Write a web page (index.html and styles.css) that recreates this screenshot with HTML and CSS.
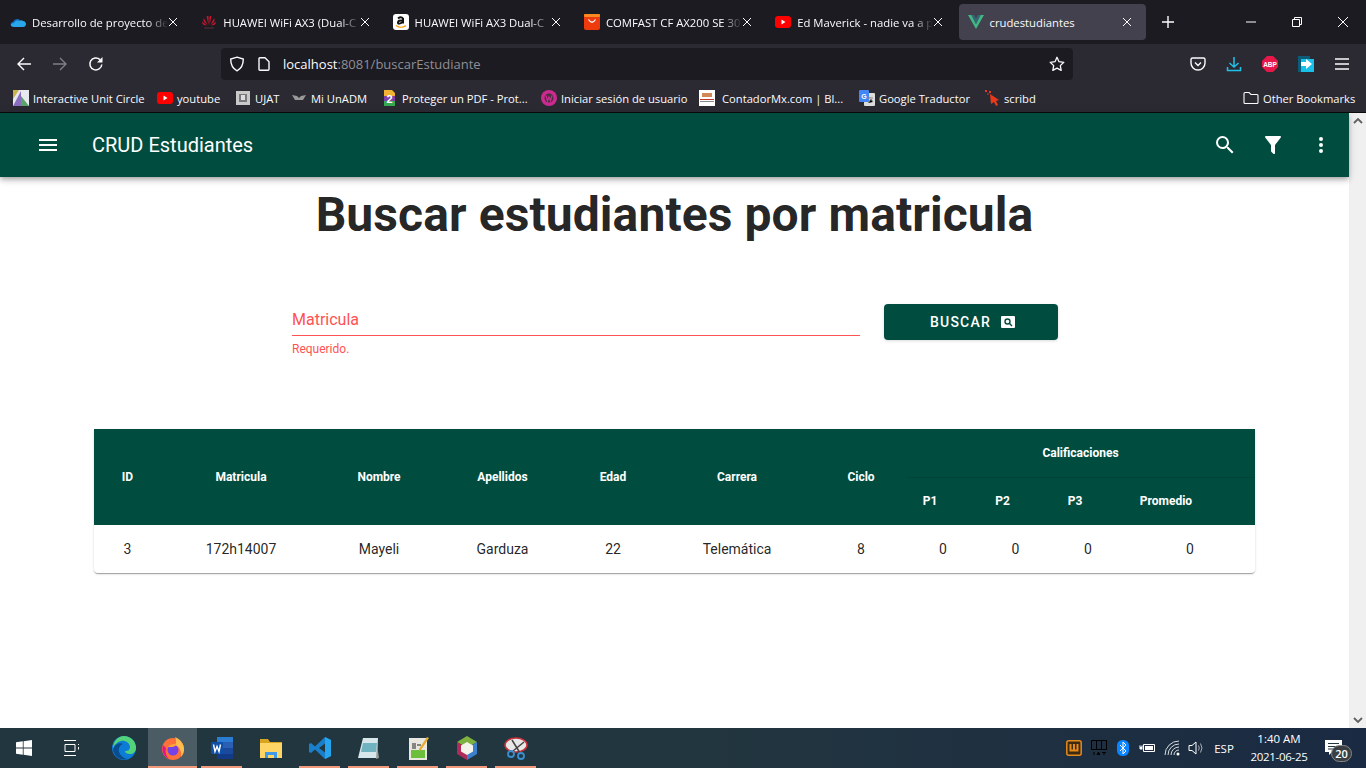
FILE: index.html
```html
<!DOCTYPE html>
<html>

<head>
    <title>crudestudiantes</title>
    <link rel="stylesheet" href="styles.css">
</head>

<body>
    <div class="tabs-bar">
        <div class="tab">
            <svg class="fav" viewBox="0 0 16 16"><path fill="#0f6cc4" d="M1 12c-1-2 0-4 2-4 1-3 5-4 7-2l-3 6z"/><path fill="#28a8ea" d="M4 13c-2 0-3-1-3-2s1-2 3-2c1-2 3-3 5-2 1-1 3-1 4 0 2 0 3 2 3 3s-1 3-3 3z"/></svg>
            <span class="tab-title">Desarrollo de proyecto de</span>
            <svg class="tab-close" viewBox="0 0 10 10"><path stroke="#fbfbfe" d="M1 1l8 8M9 1 1 9"/></svg>
        </div>
        <div class="tab">
            <svg class="fav" viewBox="0 0 16 16"><g fill="#c7162b"><path d="M7.400 11 5.600 2.500Q7 1 7.600 3z"/><path d="M8.600 11l1.800-8.500Q9 1 8.400 3z"/><path d="M6.600 11 2.800 4Q2 6 3 8z"/><path d="M9.400 11l3.800-7Q14 6 13 8z"/><path d="M6 11.500 1 7.500Q1 10 3 11z"/><path d="M10 11.500l5-4Q15 10 13 11z"/></g><rect x="3" y="13.500" width="10" height="1" fill="#5a3038"/></svg>
            <span class="tab-title">HUAWEI WiFi AX3 (Dual-C</span>
            <svg class="tab-close" viewBox="0 0 10 10"><path stroke="#fbfbfe" d="M1 1l8 8M9 1 1 9"/></svg>
        </div>
        <div class="tab">
            <svg class="fav" viewBox="0 0 16 16"><rect width="16" height="16" rx="3" fill="#fff"/><path fill="none" stroke="#111" stroke-width="2" d="M5 4.500Q8 2 10 4.500V9.500M10 6.500Q5 6 5 8.500T10 8"/><path fill="none" stroke="#f90" stroke-width="1.200" d="M3 11.500Q8 15 13 11.500"/></svg>
            <span class="tab-title">HUAWEI WiFi AX3 Dual-C</span>
            <svg class="tab-close" viewBox="0 0 10 10"><path stroke="#fbfbfe" d="M1 1l8 8M9 1 1 9"/></svg>
        </div>
        <div class="tab">
            <svg class="fav" viewBox="0 0 16 16"><rect width="16" height="16" rx="2" fill="#ee3a0c"/><rect width="16" height="3" rx="1" fill="#f98a1f"/><path fill="none" stroke="#fff" stroke-width="1.300" d="M4.500 5.500Q8 11 11.500 5.500"/></svg>
            <span class="tab-title">COMFAST CF AX200 SE 30</span>
            <svg class="tab-close" viewBox="0 0 10 10"><path stroke="#fbfbfe" d="M1 1l8 8M9 1 1 9"/></svg>
        </div>
        <div class="tab">
            <svg class="fav" viewBox="0 0 16 16"><rect y="2" width="16" height="12" rx="3" fill="#f00"/><path fill="#fff" d="M6.500 5.500v5l4-2.500z"/></svg>
            <span class="tab-title">Ed Maverick - nadie va a p</span>
            <svg class="tab-close" viewBox="0 0 10 10"><path stroke="#fbfbfe" d="M1 1l8 8M9 1 1 9"/></svg>
        </div>
        <div class="tab tab-active">
            <svg class="fav" viewBox="0 0 16 16"><path fill="#41b883" d="M0 1h3.500L8 10l4.500-9H16L8 15z"/><path fill="#35697a" d="M3.500 1H6l2 4 2-4h2.500L8 10z"/></svg>
            <span class="tab-title">crudestudiantes</span>
            <svg class="tab-close" viewBox="0 0 10 10"><path stroke="#fbfbfe" d="M1 1l8 8M9 1 1 9"/></svg>
        </div>
        <svg class="new-tab" viewBox="0 0 14 14"><path stroke="#fbfbfe" stroke-width="1.400" d="M7 1v12M1 7h12"/></svg>
        <div class="win-buttons">
            <svg viewBox="0 0 12 12"><path stroke="#fff" d="M1 6h10"/></svg>
            <svg viewBox="0 0 12 12"><path fill="none" stroke="#fff" d="M1.500 3.500h7v7h-7zM3.500 3.500v-2h7v7h-2"/></svg>
            <svg viewBox="0 0 12 12"><path stroke="#fff" d="M1 1l10 10M11 1 1 11"/></svg>
        </div>
    </div>

    <div class="nav-bar">
        <svg class="nav-icon" viewBox="0 0 16 16"><path fill="none" stroke="#fbfbfe" stroke-width="1.400" d="M15 8H2M8 2 2 8l6 6"/></svg>
        <svg class="nav-icon nav-off" viewBox="0 0 16 16"><path fill="none" stroke="#fbfbfe" stroke-width="1.400" d="M1 8h13M8 2l6 6-6 6"/></svg>
        <svg class="nav-icon" viewBox="0 0 16 16"><path fill="none" stroke="#fbfbfe" stroke-width="1.500" d="M13.800 8.500A6 6 0 1 1 12 3.600"/><path fill="#fbfbfe" d="M14.500 1v5.500H9z"/></svg>
        <div class="url-bar">
            <svg class="url-icon" viewBox="0 0 16 16"><path fill="none" stroke="#fbfbfe" stroke-width="1.400" d="M8 1.200 14.300 3c0 6-1.800 9.500-6.300 11.800C3.500 12.500 1.700 9 1.700 3z"/></svg>
            <svg class="url-icon url-doc" viewBox="0 0 16 16"><path fill="none" stroke="#fbfbfe" stroke-width="1.400" stroke-linejoin="round" d="M3 2.800q0-1 1-1h5l4 4v7.400q0 1-1 1H4q-1 0-1-1z"/></svg>
            <span class="url-text">localhost<span class="url-dim">:8081/buscarEstudiante</span></span>
            <svg class="url-star" viewBox="0 0 16 16"><path fill="none" stroke="#fbfbfe" stroke-width="1.300" stroke-linejoin="round" d="m8 1.300 2 4.400 4.800.6-3.500 3.300.9 4.800L8 12.100l-4.200 2.300.9-4.800L1.200 6.300 6 5.700z"/></svg>
        </div>
        <div class="nav-right">
            <svg viewBox="0 0 16 16"><path fill="none" stroke="#fbfbfe" stroke-width="1.400" d="M2.500 2h11q1.500 0 1.500 1.500V7A7 7 0 0 1 1 7V3.500Q1 2 2.500 2z"/><path fill="none" stroke="#fbfbfe" stroke-width="1.400" d="m5 6.500 3 3 3-3"/></svg>
            <svg viewBox="0 0 16 16"><path fill="none" stroke="#1fc2ea" stroke-width="1.500" d="M8 1v10M3.500 7 8 11l4.500-4M1.500 11v3.500h13V11"/></svg>
            <svg viewBox="0 0 16 16"><path fill="#e8174a" d="M5 0h6l5 5v6l-5 5H5l-5-5V5z"/><text class="abp-text" x="8" y="10.500">ABP</text></svg>
            <svg viewBox="0 0 16 16"><path fill="#0b5c78" d="M0 0h12v3H3v13H0z"/><path fill="#18c1e8" d="M3 3h13v13H3z"/><path fill="#fff" d="M3 6h5V3l6 5-6 5v-3H3z"/></svg>
            <svg viewBox="0 0 16 16"><path stroke="#fbfbfe" stroke-width="1.400" d="M1 3h14M1 8h14M1 13h14"/></svg>
        </div>
    </div>

    <div class="bookmarks">
        <div class="bm">
            <svg class="bm-icon" viewBox="0 0 16 16"><rect width="16" height="16" fill="#e8e8ef"/><path fill="#8a6fc0" d="M0 16 8 1v15z"/><path fill="#5aa36a" d="M8 6l8 10H8z"/><path fill="#c9b34d" d="M0 0h6L0 9z"/></svg>
            <span>Interactive Unit Circle</span>
        </div>
        <div class="bm">
            <svg class="bm-icon" viewBox="0 0 16 16"><rect y="2" width="16" height="12" rx="3" fill="#f00"/><path fill="#fff" d="M6.500 5.500v5l4-2.500z"/></svg>
            <span>youtube</span>
        </div>
        <div class="bm">
            <svg class="bm-icon" viewBox="0 0 16 16"><rect x="1" y="1" width="14" height="14" fill="#c9c9c9"/><rect x="4" y="4" width="8" height="8" fill="#77787c"/><path fill="#ddd" d="M6 5h4v5H6z"/></svg>
            <span>UJAT</span>
        </div>
        <div class="bm">
            <svg class="bm-icon" viewBox="0 0 16 16"><path fill="#999" d="M1 5l5 1 2 2 2-2 5-1-3 5H8L4 10z"/></svg>
            <span>Mi UnADM</span>
        </div>
        <div class="bm">
            <svg class="bm-icon" viewBox="0 0 16 16"><path fill="#f2b233" d="M2 0h8l3 3v3H2z"/><path fill="#7d3fa8" d="M2 6h11v5H2z"/><path fill="#35a852" d="M2 11h11v5H2z"/><text class="bm-two" x="7.500" y="13">2</text></svg>
            <span>Proteger un PDF - Prot...</span>
        </div>
        <div class="bm">
            <svg class="bm-icon" viewBox="0 0 16 16"><circle cx="8" cy="8" r="8" fill="#cc2a8f"/><circle cx="8" cy="8" r="4.500" fill="#43313f"/><path fill="none" stroke="#cc2a8f" stroke-width="1.300" d="M5 5.500 6.500 11 8 7l1.500 4L11 5.500"/></svg>
            <span>Iniciar sesión de usuario</span>
        </div>
        <div class="bm">
            <svg class="bm-icon" viewBox="0 0 16 16"><rect width="16" height="16" fill="#fff"/><rect x="3" y="3" width="10" height="4" fill="#d18a56"/><rect x="1" y="9" width="14" height="1" fill="#c0392b"/><rect x="1" y="11" width="14" height="1" fill="#888"/></svg>
            <span class="bm-wide">ContadorMx.com | Bl...</span>
        </div>
        <div class="bm">
            <svg class="bm-icon" viewBox="0 0 16 16"><rect x="5" y="3" width="11" height="13" rx="1" fill="#dcdcdc"/><rect width="10" height="12" rx="1" fill="#4285f4"/><text class="bm-g" x="5" y="9">G</text><path stroke="#888" d="M8 8h6M11 7v1M9 13l3-4 2 3"/></svg>
            <span>Google Traductor</span>
        </div>
        <div class="bm">
            <svg class="bm-icon" viewBox="0 0 16 16"><path fill="#e8391a" d="m6 4 9 6-3 1 2 4-2 1-2-4-3 2z"/><path fill="#e8391a" d="M1 0h2v2H1zM5 1h2v2H5z"/><path fill="#6b3a30" d="M3 3h2v2H3z"/></svg>
            <span>scribd</span>
        </div>
        <div class="bm bm-other">
            <svg class="bm-icon" viewBox="0 0 16 16"><path fill="none" stroke="#fbfbfe" stroke-width="1.100" d="M1 3.500q0-1 1-1h4l2 2h6q1 0 1 1v7q0 1-1 1H2q-1 0-1-1z"/></svg>
            <span>Other Bookmarks</span>
        </div>
    </div>

    <div class="viewport">
        <div class="page">
            <header class="app-bar">
                <svg class="app-icon menu-icon" viewBox="0 0 24 24"><path d="M3,6H21V8H3V6M3,11H21V13H3V11M3,16H21V18H3V16Z"/></svg>
                <div class="app-title">CRUD Estudiantes</div>
                <svg class="app-icon" viewBox="0 0 24 24"><path d="M9.5,3A6.5,6.5 0 0,1 16,9.5C16,11.11 15.41,12.59 14.44,13.73L14.71,14H15.5L20.5,19L19,20.5L14,15.5V14.71L13.73,14.44C12.59,15.41 11.11,16 9.5,16A6.5,6.5 0 0,1 3,9.5A6.5,6.5 0 0,1 9.5,3M9.5,5C7,5 5,7 5,9.5C5,12 7,14 9.5,14C12,14 14,12 14,9.5C14,7 12,5 9.500,5Z"/></svg>
                <svg class="app-icon" viewBox="0 0 24 24"><path d="M14,12V19.88C14.04,20.18 13.94,20.5 13.71,20.71C13.32,21.1 12.69,21.1 12.3,20.71L10.29,18.7C10.06,18.47 9.96,18.16 10,17.87V12H9.97L4.21,4.62C3.87,4.19 3.95,3.56 4.38,3.22C4.57,3.08 4.78,3 5,3V3H19V3C19.22,3 19.43,3.08 19.62,3.22C20.05,3.56 20.13,4.19 19.79,4.62L14.03,12H14Z"/></svg>
                <svg class="app-icon" viewBox="0 0 24 24"><path d="M12,16A2,2 0 0,1 14,18A2,2 0 0,1 12,20A2,2 0 0,1 10,18A2,2 0 0,1 12,16M12,10A2,2 0 0,1 14,12A2,2 0 0,1 12,14A2,2 0 0,1 10,12A2,2 0 0,1 12,10M12,4A2,2 0 0,1 14,6A2,2 0 0,1 12,8A2,2 0 0,1 10,6A2,2 0 0,1 12,4Z"/></svg>
            </header>

            <h1>Buscar estudiantes por matricula</h1>

            <form class="search-form">
                <div class="field">
                    <label class="field-label">Matricula</label>
                    <div class="field-hint">Requerido.</div>
                </div>
                <button class="search-button" type="button">
                    BUSCAR
                    <svg viewBox="0 0 16 16"><rect x="1" y="2" width="14" height="12" rx="1" fill="#fff"/><circle cx="7.500" cy="7.500" r="2.500" fill="none" stroke="#004d40" stroke-width="1.400"/><path stroke="#004d40" stroke-width="1.400" d="m9.500 9.500 2.500 2.500"/></svg>
                </button>
            </form>

            <div class="table-card">
                <table>
                    <colgroup>
                        <col class="col-id">
                        <col class="col-matricula">
                        <col class="col-nombre">
                        <col class="col-apellidos">
                        <col class="col-edad">
                        <col class="col-carrera">
                        <col class="col-ciclo">
                        <col class="col-p1">
                        <col class="col-p2">
                        <col class="col-p3">
                        <col class="col-promedio">
                    </colgroup>
                    <thead>
                        <tr>
                            <th rowspan="2">ID</th>
                            <th rowspan="2">Matricula</th>
                            <th rowspan="2">Nombre</th>
                            <th rowspan="2">Apellidos</th>
                            <th rowspan="2">Edad</th>
                            <th rowspan="2">Carrera</th>
                            <th rowspan="2">Ciclo</th>
                            <th colspan="4" class="group-head">Calificaciones</th>
                        </tr>
                        <tr>
                            <th class="sub-head">P1</th>
                            <th class="sub-head">P2</th>
                            <th class="sub-head">P3</th>
                            <th class="sub-head-wide">Promedio</th>
                        </tr>
                    </thead>
                    <tbody>
                        <tr>
                            <td>3</td>
                            <td>172h14007</td>
                            <td>Mayeli</td>
                            <td>Garduza</td>
                            <td>22</td>
                            <td>Telemática</td>
                            <td>8</td>
                            <td>0</td>
                            <td>0</td>
                            <td>0</td>
                            <td>0</td>
                        </tr>
                    </tbody>
                </table>
            </div>
        </div>
        <div class="scrollbar">
            <svg viewBox="0 0 10 6"><path fill="none" stroke="#606060" stroke-width="1.800" d="M1 5l4-4 4 4"/></svg>
            <svg viewBox="0 0 10 6"><path fill="none" stroke="#606060" stroke-width="1.800" d="M1 1l4 4 4-4"/></svg>
        </div>
    </div>

    <div class="taskbar">
        <div class="task-fixed">
            <svg class="task-icon-sm" viewBox="0 0 16 16"><path fill="#fff" d="M0 2.300 6.800 1.300v6.300H0zM7.600 1.200 16 0v7.600H7.600zM0 8.400h6.800v6.300L0 13.700zM7.600 8.400H16V16l-8.400-1.200z"/></svg>
        </div>
        <div class="task-fixed task-view">
            <svg class="task-icon-sm" viewBox="0 0 16 16"><path fill="none" stroke="#fff" d="M0 .5h12M0 15.500h12M1 4.500h10v7H1zM14.500 4v1M14.500 7v2.500"/></svg>
        </div>
        <div class="task-slot">
            <svg viewBox="0 0 24 24"><circle cx="12" cy="12" r="12" fill="#0c7cd5"/><path fill="#52d27a" d="M12 0a12 12 0 0 1 12 12c0 4-3 6-6 6s-5-1-5-3c3 0 5-1 5-4 0-4-5-7-9-6-4 1-7 4-8 8C1 5 6 0 12 0z"/><path fill="#0a4d8f" d="M1 14c1-5 6-8 10-6-3 1-5 4-4 8 1 3 4 6 8 7-7 2-13-3-14-9z"/></svg>
        </div>
        <div class="task-slot task-active task-open">
            <svg viewBox="0 0 24 24"><circle cx="12" cy="13" r="11" fill="#ff7139"/><path fill="#ffbd4f" d="M14 1c5 2 9 7 9 12 0 3-1 6-3 8 1-5-1-10-6-12 2-3 1-6 0-8z"/><circle cx="12" cy="14" r="5.500" fill="#7542e5"/><path fill="#e31587" d="M2 9c-2 6 1 12 6 14-3-3-4-7-3-11z"/><path fill="#ffa436" d="M7 11c2-3 6-4 9-2l-4 2z"/></svg>
        </div>
        <div class="task-slot task-open">
            <svg viewBox="0 0 24 24"><rect x="7" y="1" width="16" height="22" fill="#2b7cd3"/><rect x="7" y="6" width="16" height="6" fill="#2b5fb4"/><rect x="7" y="12" width="16" height="6" fill="#1b4a9c"/><rect x="7" y="18" width="16" height="5" fill="#123a86"/><rect x="1" y="6" width="12" height="12" rx="1" fill="#0f4fa8"/><path fill="none" stroke="#fff" stroke-width="1.400" d="m3.500 8.500 1.500 7 2-5 2 5 1.500-7"/></svg>
        </div>
        <div class="task-slot">
            <svg viewBox="0 0 24 24"><path fill="#d9a520" d="M1 3h8l2 3h12v5H1z"/><path fill="#ffd665" d="M1 7h22v15H1z"/><path fill="#3f9be8" d="M6 16h12v6h-3v-3H9v3H6z"/></svg>
        </div>
        <div class="task-slot task-open">
            <svg viewBox="0 0 24 24"><path fill="#1a7fcb" d="M17 1l6 3v16l-6 3L7 13.500 3 17l-2-1V8l2-1 4 3.500z"/><path fill="#26a5ee" d="M17 1l6 3v16l-6 3z"/><path fill="#22363f" d="M17 7.500v9L11 12z"/></svg>
        </div>
        <div class="task-slot task-open">
            <svg viewBox="0 0 24 24"><path fill="#d7e6ea" d="M6 2h15l-1 20H1z"/><path fill="#6fb2c0" d="M6 7h14l-1 9H4z"/><path fill="#9a9a9a" d="M20 9l2 13-3 1z"/></svg>
        </div>
        <div class="task-slot task-open">
            <svg viewBox="0 0 24 24"><rect x="3" y="2" width="18" height="22" fill="#e8e8e0"/><rect x="5" y="14" width="14" height="8" fill="#6bbf3a"/><path stroke="#222" d="M7 7v6M9 7v6M11 9h4"/><path fill="#e9a92b" d="M21 1l2 1-8 12-2 1 0-2z"/></svg>
        </div>
        <div class="task-slot task-open">
            <svg viewBox="0 0 24 24"><path fill="#7fb13f" d="M12 0l10 6-10 6L2 6z"/><path fill="#b02a5a" d="M2 6l10 6v12L2 18z"/><path fill="#3b7fcf" d="M22 6 12 12v12l10-6z"/><path fill="#f4f4ea" d="M12 6l6 3.500v6L12 19l-6-3.500v-6z"/></svg>
        </div>
        <div class="task-slot task-open">
            <svg viewBox="0 0 24 24"><ellipse cx="12" cy="9" rx="11" ry="7" fill="#e8e8e8" stroke="#c8323a" stroke-width="1.500"/><path stroke="#444" stroke-width="1.500" d="m8 4 8 13M20 6 9 15"/><circle cx="7" cy="18" r="3" fill="none" stroke="#3a8fd0" stroke-width="1.800"/><circle cx="17" cy="20" r="3" fill="none" stroke="#3a8fd0" stroke-width="1.800"/></svg>
        </div>

        <div class="tray">
            <svg class="tray-icon" viewBox="0 0 16 16"><rect x=".8" y=".8" width="14.400" height="14.400" rx="2" fill="#3d2a12" stroke="#e68a1c" stroke-width="1.500"/><path fill="none" stroke="#e68a1c" stroke-width="2" d="M4.500 4v6.500h7V4M8 4v6"/></svg>
            <svg class="tray-icon" viewBox="0 0 16 16"><path fill="none" stroke="#000" d="M.5.500h15v9H.5zM5.500.500v9M10.500.500v9"/><path stroke="#000" d="M3 12v3M6 15l1.500-3L9 15M11 12.500h4M13 12.500V15"/></svg>
            <svg class="tray-icon" viewBox="0 0 16 16"><rect x="2" width="12" height="16" rx="5.500" fill="#0a84ff"/><path fill="none" stroke="#fff" d="m5 5 6 6-3 3V2l3 3-6 6"/></svg>
            <svg class="tray-icon" viewBox="0 0 16 16"><path fill="none" stroke="#fff" d="M4.500 4.500h11v7h-11z"/><rect x="6" y="6" width="8" height="4" fill="#fff"/><path stroke="#fff" stroke-width="1.200" d="M0 8h3M1 5.500V7M3 5.500V7"/><rect x="1" y="7" width="2.500" height="2.500" fill="#fff"/></svg>
            <svg class="tray-icon" viewBox="0 0 16 16"><g fill="none" stroke="#d8dde0"><path d="M1 15A14 14 0 0 1 15 1"/><path d="M4 15A11 11 0 0 1 15 4"/><path d="M7 15a8 8 0 0 1 8-8"/><path d="M10 15a5 5 0 0 1 5-5"/></g><circle cx="14" cy="14" r="1.500" fill="#fff"/></svg>
            <svg class="tray-icon" viewBox="0 0 16 16"><path fill="none" stroke="#fff" d="M1 5.500h3L8 2v12l-4-3.500H1z"/><path fill="none" stroke="#a8b0b8" d="M10.500 5.500q1.500 2.500 0 5M12.500 3.500q3 4.500 0 9"/></svg>
            <div class="tray-lang">ESP</div>
            <div class="tray-clock">
                <div>1:40 AM</div>
                <div class="tray-date">2021-06-25</div>
            </div>
            <div class="notif">
                <svg viewBox="0 0 18 16"><path fill="#fff" d="M0 0h17v12H7l-3 3v-3H0z"/><path stroke="#22363f" d="M3 3.500h11M3 6.500h11M3 9h7"/></svg>
                <span class="notif-badge">20</span>
            </div>
        </div>
    </div>
</body>

</html>
```

FILE: styles.css
```css
* {
    box-sizing: border-box;
}

html,
body {
    margin: 0;
    height: 100%;
    overflow: hidden;
}

body {
    display: flex;
    flex-direction: column;
    width: 1366px;
    height: 768px;
    font-family: 'Roboto', sans-serif;
    background-color: #fff;
}

/* browser tabs */
.tabs-bar {
    display: flex;
    align-items: center;
    height: 44px;
    padding-left: 1px;
    background-color: #1c1b22;
    color: #fbfbfe;
    font-family: 'Open Sans', sans-serif;
    font-size: 11.300px;
}

.tab {
    display: flex;
    align-items: center;
    flex: 0 0 191.300px;
    min-width: 0;
    height: 36px;
    padding: 0 9px;
    border-radius: 4px;
}

.tab-active {
    flex-basis: 187px;
    margin-left: 2px;
    background-color: #42414d;
}

.fav {
    flex: 0 0 16px;
    height: 16px;
    margin-right: 6px;
}

.tab-active .fav {
    margin-right: 5px;
}

.tab-title {
    flex: 1;
    min-width: 0;
    overflow: hidden;
    white-space: nowrap;
    -webkit-mask-image: linear-gradient(to right, #000 85%, transparent 100%);
    mask-image: linear-gradient(to right, #000 85%, transparent 100%);
}

.tab-active .tab-title {
    -webkit-mask-image: none;
    mask-image: none;
}

.tab-close {
    flex: 0 0 10px;
    height: 10px;
    margin-left: 0;
    margin-right: 5px;
}

.new-tab {
    width: 14px;
    height: 14px;
    margin-left: 15px;
}

.win-buttons {
    display: flex;
    gap: 34px;
    margin-left: auto;
    padding-right: 17px;
}

.win-buttons svg {
    width: 12px;
    height: 12px;
}

/* toolbar */
.nav-bar {
    display: flex;
    align-items: center;
    height: 40px;
    padding-left: 16px;
    background-color: #2b2a33;
}

.nav-icon {
    flex: 0 0 16px;
    height: 16px;
    margin-right: 20px;
}

.nav-off {
    opacity: 0.4;
}

.url-bar {
    display: flex;
    align-items: center;
    width: 852px;
    height: 32px;
    margin-left: 97px;
    padding: 0 8px;
    border-radius: 4px;
    background-color: #1c1b22;
    color: #fbfbfe;
    font-family: 'Open Sans', sans-serif;
    font-size: 13px;
}

.url-icon {
    flex: 0 0 16px;
    height: 16px;
}

.url-doc {
    margin-left: 11px;
    margin-right: 11px;
}

.url-dim {
    color: #8f8f94;
}

.url-star {
    width: 16px;
    height: 16px;
    margin-left: auto;
}

.nav-right {
    display: flex;
    gap: 20px;
    margin-left: 117px;
}

.nav-right svg {
    width: 16px;
    height: 16px;
}

.abp-text {
    fill: #fff;
    font-family: 'Liberation Sans', sans-serif;
    font-size: 6.500px;
    font-weight: 700;
    text-anchor: middle;
}

/* bookmarks */
.bookmarks {
    display: grid;
    grid-template-columns: 144px 78px 56px 91px 159px 158px 160px 125px 1fr 123px;
    align-items: center;
    height: 29px;
    padding-left: 13px;
    background-color: #2b2a33;
    border-bottom: 1px solid #0c0c0d;
    color: #fbfbfe;
    font-family: 'Open Sans', sans-serif;
    font-size: 11.200px;
}

.bm {
    display: flex;
    align-items: center;
    gap: 4px;
    white-space: nowrap;
}

.bm-icon {
    flex: 0 0 16px;
    height: 16px;
}

.bm-wide {
    margin-left: 3px;
}

.bm-other {
    grid-column: 10;
}

.bm-two {
    fill: #fff;
    font-family: 'Liberation Sans', sans-serif;
    font-size: 11px;
    font-weight: 700;
    text-anchor: middle;
}

.bm-g {
    fill: #fff;
    font-family: 'Liberation Sans', sans-serif;
    font-size: 7px;
    font-weight: 700;
    text-anchor: middle;
}

/* page */
.viewport {
    display: flex;
    flex: 1;
    min-height: 0;
}

.page {
    flex: 1;
    min-width: 0;
}

.scrollbar {
    display: flex;
    flex-direction: column;
    justify-content: space-between;
    flex: 0 0 17px;
    padding: 5px 3.500px;
    background-color: #f0f0f0;
}

.scrollbar svg {
    width: 10px;
    height: 6px;
}

.app-bar {
    position: relative;
    display: flex;
    align-items: center;
    gap: 24px;
    height: 64px;
    padding: 0 16px 0 36px;
    background-color: #004d40;
    color: #fff;
    box-shadow: 0 2px 4px -1px rgba(0, 0, 0, 0.2), 0 4px 5px 0 rgba(0, 0, 0, 0.14), 0 1px 10px 0 rgba(0, 0, 0, 0.12);
}

.app-icon {
    flex: 0 0 24px;
    height: 24px;
    fill: #fff;
}

.menu-icon {
    margin-right: 8px;
}

.app-title {
    flex: 1;
    font-size: 20px;
    font-weight: 400;
    letter-spacing: 0;
}

h1 {
    margin: 0;
    height: 76px;
    color: rgba(0, 0, 0, 0.87);
    font-size: 48px;
    font-weight: 700;
    letter-spacing: 0.090px;
    line-height: 76px;
    text-align: center;
}

.search-form {
    display: flex;
    gap: 24px;
    width: 766px;
    margin: 51px auto 0 292px;
}

.field {
    width: 568px;
}

.field-label {
    display: block;
    height: 32px;
    border-bottom: 1px solid #ff5252;
    color: #ff5252;
    font-size: 16px;
    line-height: 32px;
}

.field-hint {
    margin-top: 6px;
    color: #ff5252;
    font-size: 12px;
    line-height: 14px;
}

.search-button {
    display: flex;
    align-items: center;
    justify-content: center;
    gap: 9px;
    width: 174px;
    height: 36px;
    padding: 0 0 0 4px;
    border: none;
    border-radius: 4px;
    background-color: #004d40;
    color: #fff;
    font-family: 'Roboto', sans-serif;
    font-size: 14px;
    font-weight: 500;
    letter-spacing: 1.250px;
    box-shadow: 0 1px 3px rgba(0, 0, 0, 0.15);
}

.search-button svg {
    width: 16px;
    height: 16px;
}

.table-card {
    width: 1161px;
    margin: 73px auto 0;
    overflow: hidden;
    border-radius: 0 0 4px 4px;
    background-color: #fff;
    box-shadow: 0 2px 1px -1px rgba(0, 0, 0, 0.2), 0 1px 1px 0 rgba(0, 0, 0, 0.14), 0 1px 3px 0 rgba(0, 0, 0, 0.12);
}

table {
    width: 100%;
    table-layout: fixed;
    border-collapse: collapse;
}

.col-id { width: 67px; }
.col-matricula { width: 160px; }
.col-nombre { width: 116px; }
.col-apellidos { width: 131px; }
.col-edad { width: 90px; }
.col-carrera { width: 158px; }
.col-ciclo { width: 90px; }
.col-p1 { width: 74px; }
.col-p2 { width: 71px; }
.col-p3 { width: 74px; }
.col-promedio { width: 130px; }

th,
td {
    height: 48px;
    padding: 0;
    text-align: center;
}

th {
    background-color: #004d40;
    color: #fff;
    font-size: 12px;
    font-weight: 700;
}

td {
    color: rgba(0, 0, 0, 0.87);
    font-size: 14px;
}

.group-head {
    border-bottom: 1px solid rgba(0, 0, 0, 0.12);
}

.sub-head {
    padding-right: 26px;
}

.sub-head-wide {
    padding-right: 48px;
}

/* windows taskbar */
.taskbar {
    display: flex;
    align-items: stretch;
    height: 40px;
    background: linear-gradient(to right, #22363f, #22363f 50%, #1a2a42);
}

.task-fixed {
    display: flex;
    align-items: center;
    justify-content: center;
    flex: 0 0 48px;
}

.task-view {
    flex-basis: 47px;
    margin-right: 4px;
}

.task-icon-sm {
    width: 16px;
    height: 16px;
}

.task-slot {
    display: flex;
    align-items: center;
    justify-content: center;
    flex: 0 0 49px;
    position: relative;
}

.task-slot svg {
    width: 24px;
    height: 24px;
}

.task-active {
    background-color: #4b5c64;
}

.task-open::after {
    content: "";
    position: absolute;
    left: 4px;
    right: 4px;
    bottom: 0;
    height: 2px;
    background-color: #f3997b;
}

.task-active::after {
    left: 0;
    right: 0;
}

.tray {
    display: grid;
    grid-template-columns: repeat(6, 24.300px) 32px 78px 30px;
    align-items: center;
    justify-items: center;
    margin-left: auto;
    padding-right: 18px;
    color: #fff;
    font-family: 'Open Sans', sans-serif;
    font-size: 11.500px;
}

.tray-icon {
    width: 16px;
    height: 16px;
}

.tray-clock {
    text-align: center;
    white-space: nowrap;
    line-height: 18px;
}

.tray-date {
    letter-spacing: -0.300px;
}

.notif {
    position: relative;
    width: 30px;
    height: 30px;
}

.notif svg {
    position: absolute;
    left: 7px;
    top: 7px;
    width: 18px;
    height: 16px;
}

.notif-badge {
    position: absolute;
    left: 13px;
    top: 12px;
    width: 21px;
    height: 17px;
    border: 1px solid #888;
    border-radius: 9px;
    background-color: #3a3f44;
    font-size: 11px;
    font-weight: 600;
    line-height: 15px;
    text-align: center;
}
```
